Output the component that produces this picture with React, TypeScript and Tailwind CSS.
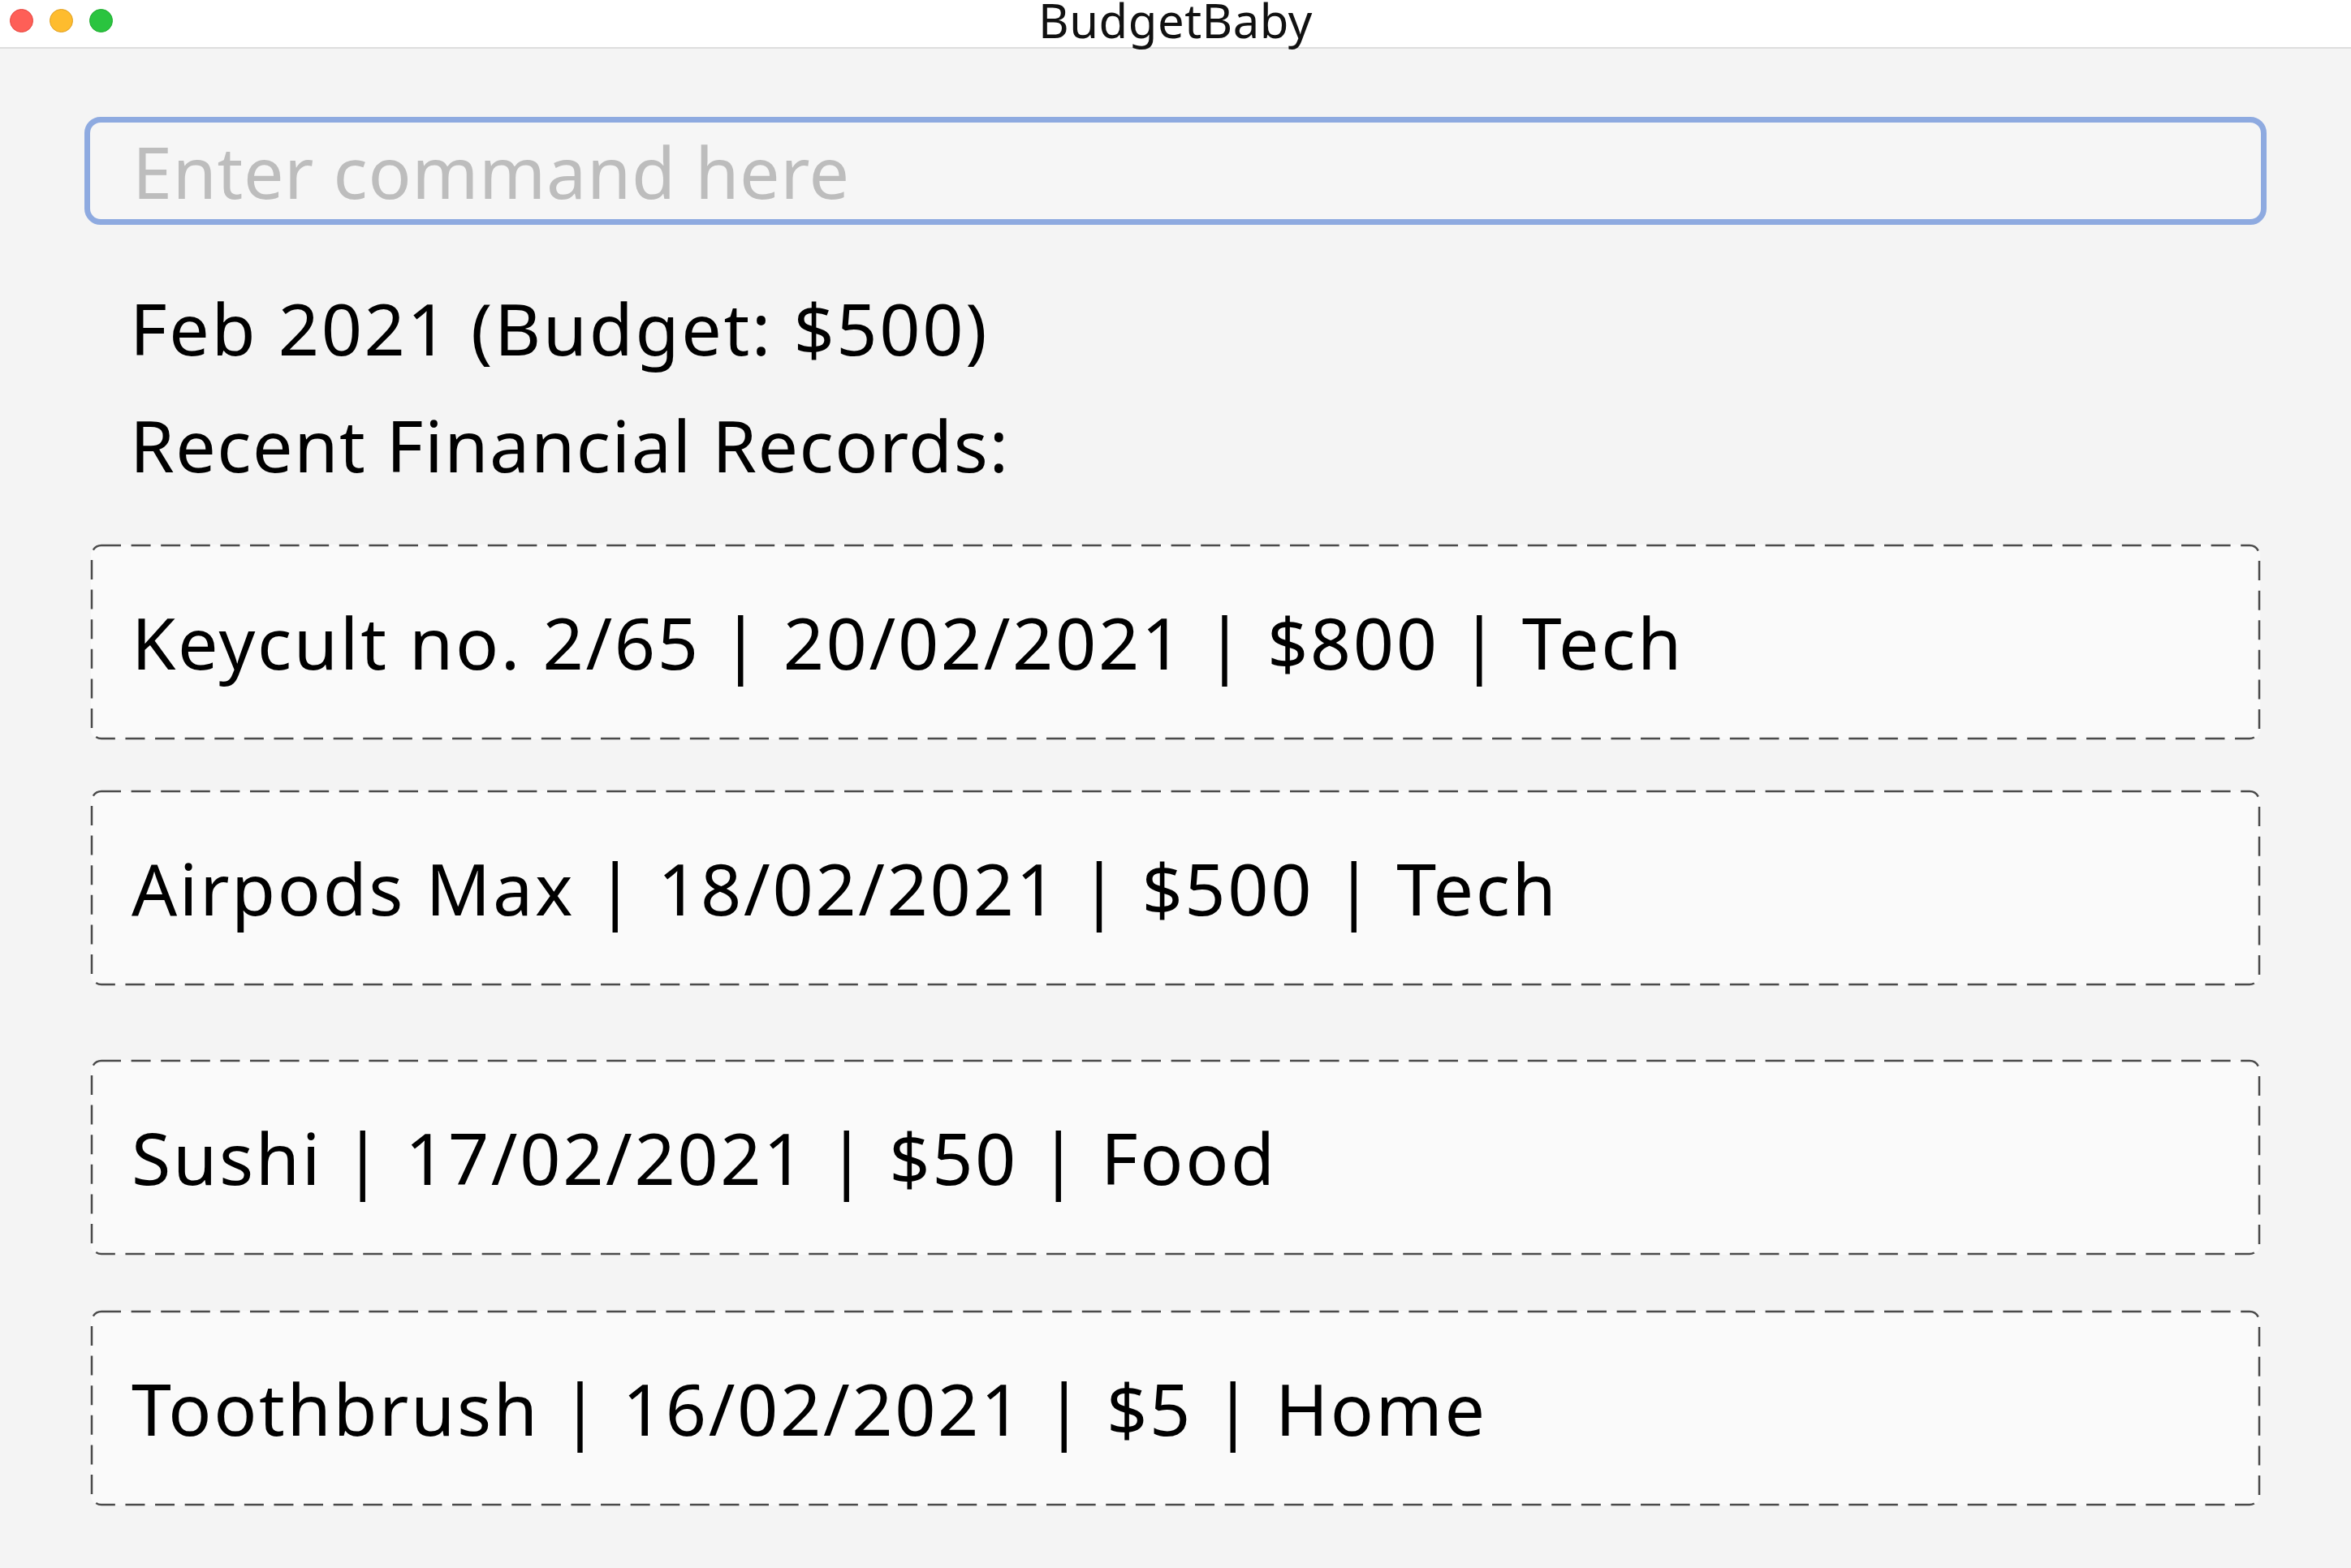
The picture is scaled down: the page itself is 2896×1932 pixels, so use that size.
import React from 'react';

const records = [
  { text: 'Keycult no. 2/65 | 20/02/2021 | $800 | Tech', gap: 'mt-[63px]' },
  { text: 'Airpods Max | 18/02/2021 | $500 | Tech', gap: 'mt-[63px]' },
  { text: 'Sushi | 17/02/2021 | $50 | Food', gap: 'mt-[92px]' },
  { text: 'Toothbrush | 16/02/2021 | $5 | Home', gap: 'mt-[69px]' },
];

// dashed outline drawn with svg so the dash length matches the JavaFX one
const DashedCard: React.FC<{ text: string; className?: string }> = ({ text, className }) => (
  <div className={`relative mx-[8px] h-[240px] rounded-[12px] bg-[#fafafa] flex items-center pl-[50px] ${className ?? ''}`}>
    <svg className="absolute inset-[1px] w-[calc(100%-2px)] h-[calc(100%-2px)] overflow-visible pointer-events-none">
      <rect
        x="0"
        y="0"
        width="100%"
        height="100%"
        rx="12"
        ry="12"
        fill="none"
        stroke="#4a4a4a"
        strokeWidth="2.5"
        strokeDasharray="24 12.6"
      />
    </svg>
    <span className="text-[88px] leading-[120px] tracking-[2.6px] text-black">{text}</span>
  </div>
);

export default function App() {
  return (
    <div className="w-[2896px] h-[1932px] overflow-hidden bg-[#f4f4f4] font-['Noto_Sans',sans-serif]">
      {/* Title bar */}
      <div className="relative h-[60px] bg-white border-b-2 border-[#dedede]">
        <div className="absolute left-[12px] top-[11px] flex gap-[20px]">
          <div className="w-[29px] h-[29px] rounded-full bg-[#fe5f57] border border-[#e5463f]" />
          <div className="w-[29px] h-[29px] rounded-full bg-[#febc2e] border border-[#dfa023]" />
          <div className="w-[29px] h-[29px] rounded-full bg-[#2ac43f] border border-[#1eab2e]" />
        </div>
        <div className="flex justify-center">
          <span className="text-[58px] leading-[59px] -mt-[5px] tracking-[0.5px] text-[#111]">BudgetBaby</span>
        </div>
      </div>

      <div className="px-[104px]">
        <input
          className="mt-[84px] w-full h-[133px] rounded-[20px] border-[7px] border-[#8eaae0] bg-[#f6f6f6] pl-[52px] text-[88px] tracking-[0.6px] text-black placeholder:text-[#bdbdbd] outline-none"
          placeholder="Enter command here"
        />

        <div className="mt-[67px] pl-[56px] text-[88px] leading-[120px] tracking-[2.6px] text-black">Feb 2021 (Budget: $500)</div>
        <div className="mt-[24px] pl-[56px] text-[88px] leading-[120px] tracking-[1.5px] text-black">Recent Financial Records:</div>

        {records.map((r) => (
          <DashedCard key={r.text} text={r.text} className={r.gap} />
        ))}
      </div>
    </div>
  );
}
